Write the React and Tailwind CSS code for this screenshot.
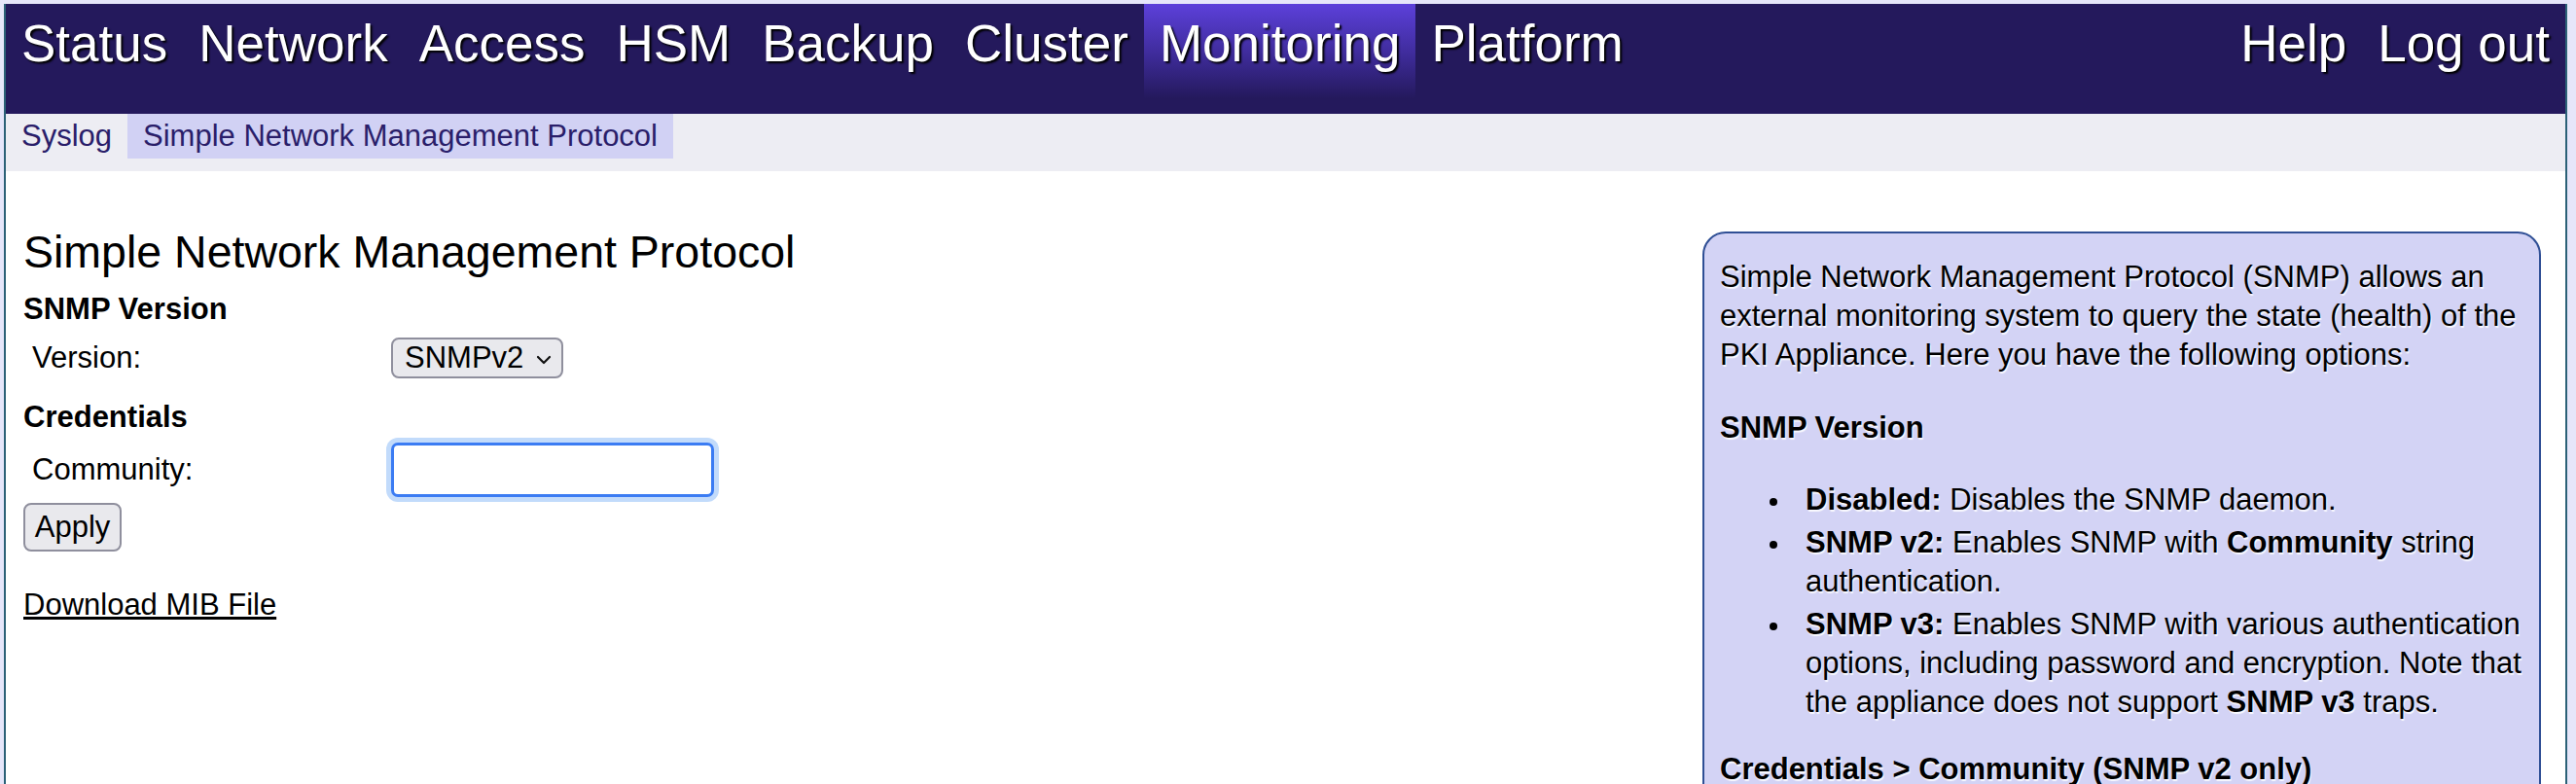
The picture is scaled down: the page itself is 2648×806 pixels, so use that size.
import { useState } from 'react'

const topNav = ['Status', 'Network', 'Access', 'HSM', 'Backup', 'Cluster', 'Monitoring', 'Platform']
const subNav = ['Syslog', 'Simple Network Management Protocol']

function NavItem({ label, active }) {
  return (
    <a
      href="#"
      className={
        'h-full px-[16px] pt-[10px] text-[53px] leading-[61px] text-white [text-shadow:2px_2px_2px_#000000] ' +
        (active ? 'bg-[linear-gradient(180deg,#5c40da_0%,#3f2c9c_45%,#24195c_86%)]' : '')
      }
    >
      {label}
    </a>
  )
}

function Bullet({ children }) {
  return (
    <li className="flex mt-[4px] first:mt-0">
      <div className="w-[37px] h-[40px] shrink-0 flex items-center pt-[4px]">
        <div className="w-[8px] h-[8px] rounded-full bg-black" />
      </div>
      <div className="flex-1">{children}</div>
    </li>
  )
}

export default function App() {
  const [version, setVersion] = useState('SNMPv2')
  const [community, setCommunity] = useState('')

  return (
    <div className="min-h-screen bg-[#e6e6fa] pt-[4px] pl-[4px] pr-[9px] font-['Liberation_Sans',Arial,sans-serif] text-black">
      <div className="min-h-[802px] bg-white border-x-2 border-[#2b6177]">
        {/* Top navigation */}
        <nav className="h-[113px] bg-[#24195c] flex justify-between">
          <div className="flex h-full">
            {topNav.map((item) => (
              <NavItem key={item} label={item} active={item === 'Monitoring'} />
            ))}
          </div>
          <div className="flex h-full">
            <NavItem label="Help" />
            <NavItem label="Log out" />
          </div>
        </nav>

        {/* Sub navigation */}
        <div className="h-[59px] bg-[#ededf3] flex items-start">
          {subNav.map((item, i) => (
            <a
              key={item}
              href="#"
              className={
                'h-[46px] px-[16px] flex items-center text-[31px] leading-[40px] text-[#2a1e6a] ' +
                (i === 1 ? 'bg-[#d1d1f4]' : '')
              }
            >
              {item}
            </a>
          ))}
        </div>

        {/* Content */}
        <main className="flex justify-between">
          <section className="pl-[18px] pt-[56px]">
            <h2 className="text-[46.5px] leading-[54px] font-normal">Simple Network Management Protocol</h2>

            <div className="mt-[12px] text-[31px] leading-[40px] font-bold">SNMP Version</div>
            <div className="mt-[9px] h-[42px] flex items-center text-[31px] leading-[40px]">
              <div className="w-[378px] pl-[9px]">Version:</div>
              <button
                type="button"
                onClick={() => setVersion(version)}
                className="h-[42px] w-[177px] pl-[12px] pr-[10px] flex items-center justify-between bg-[#e9e9ed] border-2 border-[#8f8f9d] rounded-[8px] text-[31px] leading-[40px]"
              >
                <span>{version}</span>
                <svg width="16" height="10" viewBox="0 0 16 10" fill="none" className="mt-[4px]">
                  <polyline points="2,2 8,8 14,2" stroke="#111" strokeWidth="2.2" strokeLinecap="round" strokeLinejoin="round" />
                </svg>
              </button>
            </div>

            <div className="mt-[20px] text-[31px] leading-[40px] font-bold">Credentials</div>
            <div className="mt-[6px] h-[56px] flex items-center text-[31px] leading-[40px]">
              <div className="w-[378px] pl-[9px]">Community:</div>
              <input
                type="text"
                value={community}
                onChange={(e) => setCommunity(e.target.value)}
                className="w-[332px] h-[56px] bg-white border-[3px] border-[#3b7cf3] rounded-[7px] shadow-[0_0_0_5px_#c2dbfb] outline-none px-[8px] text-[31px]"
              />
            </div>
            <button
              type="button"
              className="mt-[6px] h-[50px] w-[101px] flex items-center justify-center bg-[#e9e9ed] border-2 border-[#8f8f9d] rounded-[8px] text-[31px] leading-[40px]"
            >
              Apply
            </button>

            <a href="#" className="block mt-[35px] text-[31px] leading-[40px] underline text-black">
              Download MIB File
            </a>
          </section>

          {/* Help panel */}
          <aside className="mt-[62px] mr-[25px] w-[862px] h-fit bg-[#d3d3f5] border-2 border-[#2f4f95] rounded-[24px] pl-[16px] pr-[10px] pt-[25px] pb-[30px] text-[31px] leading-[40px] [text-shadow:1px_2px_1px_rgba(255,255,255,0.85)]">
            <p>
              Simple Network Management Protocol (SNMP) allows an external monitoring system to query the state
              (health) of the PKI Appliance. Here you have the following options:
            </p>
            <p className="mt-[35px] font-bold">SNMP Version</p>
            <ul className="mt-[34px] pl-[51px]">
              <Bullet>
                <b>Disabled:</b> Disables the SNMP daemon.
              </Bullet>
              <Bullet>
                <b>SNMP v2:</b> Enables SNMP with <b>Community</b> string authentication.
              </Bullet>
              <Bullet>
                <b>SNMP v3:</b> Enables SNMP with various authentication options, including password and encryption.
                Note that the appliance does not support <b>SNMP v3</b> traps.
              </Bullet>
            </ul>
            <p className="mt-[29px] font-bold">Credentials &gt; Community (SNMP v2 only)</p>
          </aside>
        </main>
      </div>
    </div>
  )
}
